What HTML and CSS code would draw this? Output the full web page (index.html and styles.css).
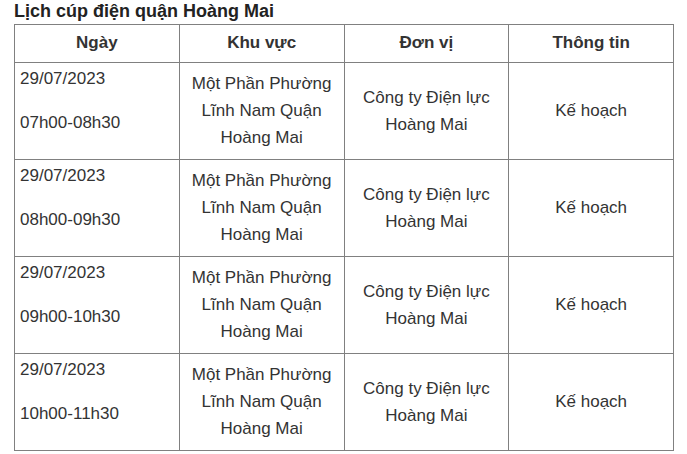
FILE: index.html
```html
<!DOCTYPE html>
<html lang="vi">
<head>
<meta charset="utf-8">
<title>Lịch cúp điện quận Hoàng Mai</title>
<link rel="stylesheet" href="styles.css">
</head>
<body>
<h2 class="title">Lịch cúp điện quận Hoàng Mai</h2>
<table class="schedule">
  <thead>
    <tr><th>Ngày</th><th>Khu vực</th><th>Đơn vị</th><th>Thông tin</th></tr>
  </thead>
  <tbody>
    <tr>
      <td class="when"><div>29/07/2023</div><div class="time">07h00-08h30</div></td>
      <td>Một Phần Phường Lĩnh Nam Quận Hoàng Mai</td>
      <td>Công ty Điện lực Hoàng Mai</td>
      <td>Kế hoạch</td>
    </tr>
    <tr>
      <td class="when"><div>29/07/2023</div><div class="time">08h00-09h30</div></td>
      <td>Một Phần Phường Lĩnh Nam Quận Hoàng Mai</td>
      <td>Công ty Điện lực Hoàng Mai</td>
      <td>Kế hoạch</td>
    </tr>
    <tr>
      <td class="when"><div>29/07/2023</div><div class="time">09h00-10h30</div></td>
      <td>Một Phần Phường Lĩnh Nam Quận Hoàng Mai</td>
      <td>Công ty Điện lực Hoàng Mai</td>
      <td>Kế hoạch</td>
    </tr>
    <tr>
      <td class="when"><div>29/07/2023</div><div class="time">10h00-11h30</div></td>
      <td>Một Phần Phường Lĩnh Nam Quận Hoàng Mai</td>
      <td>Công ty Điện lực Hoàng Mai</td>
      <td>Kế hoạch</td>
    </tr>
  </tbody>
</table>
</body>
</html>
```
FILE: styles.css
```css
html, body {
  margin: 0;
  padding: 0;
  background: #ffffff;
}
body {
  padding: 0 14px;
  font-family: "Liberation Sans", Arial, sans-serif;
  color: #333333;
}
.title {
  margin: 0;
  font-size: 18px;
  font-weight: bold;
  line-height: 22px;
  height: 24px;
  color: #222222;
}
.schedule {
  width: 660px;
  table-layout: fixed;
  border-collapse: collapse;
  font-size: 17px;
}
.schedule th,
.schedule td {
  border: 1px solid #808080;
  text-align: center;
  vertical-align: middle;
  padding: 7px 10px 8px;
}
.schedule th {
  font-weight: bold;
  line-height: 22px;
  color: #333333;
}
.schedule td {
  line-height: 27px;
}
.schedule td.when {
  text-align: left;
  vertical-align: top;
  padding: 2px 5px 0 5px;
}
.schedule .time {
  margin-top: 17px;
}
```
